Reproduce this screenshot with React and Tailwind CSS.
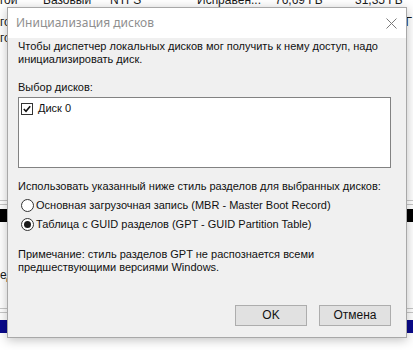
export default function App() {
  return (
    <div
      className="relative w-[413px] h-[350px] overflow-hidden bg-white text-black"
      style={{ fontFamily: '"Liberation Sans", Arial, sans-serif' }}
    >
      {/* ===== background: disk management list ===== */}
      <div className="flex flex-col text-[12px] leading-[16px] text-[#1a1a1a]">
        <div className="flex -mt-[8px] h-[16px] whitespace-nowrap">
          <span className="w-[43px]">гой</span>
          <span className="w-[67px]">Базовый</span>
          <span className="w-[87px]">NTFS</span>
          <span className="w-[78px]">Исправен...</span>
          <span className="w-[80px]">76,69 ГБ</span>
          <span>31,35 ГБ</span>
        </div>
        <div className="flex justify-between h-[16px] mt-[6px]">
          <span>гой</span>
          <span className="pr-[1px]">Г</span>
        </div>
        <div className="h-[16px]">гой</div>
        <div className="h-[154px]" />
        <div className="h-px bg-[#c8c8c8]" />
        <div className="h-[3px]" />
        <div className="h-px bg-[#c8c8c8]" />
        <div className="h-[4px]" />
        <div className="h-[13px] bg-black" />
        <div className="h-[45px]" />
        <div className="h-[16px]">ед</div>
        <div className="h-[25px]" />
        <div className="h-px bg-[#c8c8c8]" />
        <div className="h-[3px]" />
        <div className="h-px bg-[#c8c8c8]" />
        <div className="h-[7px]" />
        <div className="h-[13px] bg-[#0a0a8c]" />
      </div>

      {/* ===== dialog window ===== */}
      <div className="absolute left-[7px] top-[7px] w-[400px] h-[331px] flex flex-col border border-[#a8a8a8] bg-[#f0f0f0] shadow-[0_2px_10px_rgba(0,0,0,0.25)]">
        <div className="h-[30px] bg-white flex items-center justify-between pl-[8px] pr-[9px]">
          <span
            className="text-[12px] text-[#8f8f8f]"
            style={{ fontFamily: '"Noto Sans", "Open Sans", sans-serif' }}
          >
            Инициализация дисков
          </span>
          <svg width="11" height="11" viewBox="0 0 11 11" className="text-[#7a7a7a]">
            <path d="M0.5 0.5 L10.5 10.5 M10.5 0.5 L0.5 10.5" stroke="currentColor" strokeWidth="1" />
          </svg>
        </div>

        <div className="flex flex-col pl-[10px] pr-[15px] pt-[2px] text-[11px] leading-[13px] text-[#111]">
          <p>
            Чтобы диспетчер локальных дисков мог получить к нему доступ, надо инициализировать диск.
          </p>

          <p className="mt-[15px]">Выбор дисков:</p>

          <div className="mt-[3px] h-[71px] bg-white border border-[#828282] pt-[4px] pl-[2px]">
            <label className="flex items-center gap-[5px] h-[13px]">
              <span className="w-[12px] h-[12px] border border-[#333] bg-white flex items-center justify-center">
                <svg width="8" height="8" viewBox="0 0 8 8">
                  <path d="M0.8 4 L3 6.2 L7.2 1.2" fill="none" stroke="#111" strokeWidth="1.6" />
                </svg>
              </span>
              <span>Диск 0</span>
            </label>
          </div>

          <p className="mt-[12px]">Использовать указанный ниже стиль разделов для выбранных дисков:</p>

          <div className="mt-[3px] flex flex-col pl-[3px]">
            <label className="flex items-center gap-[2px] h-[19px]">
              <span className="w-[13px] h-[13px] rounded-full border border-[#333] bg-white" />
              <span>Основная загрузочная запись (MBR - Master Boot Record)</span>
            </label>
            <label className="flex items-center gap-[2px] h-[19px]">
              <span className="w-[13px] h-[13px] rounded-full border border-[#333] bg-white flex items-center justify-center">
                <span className="w-[7px] h-[7px] rounded-full bg-[#1a1a1a]" />
              </span>
              <span>Таблица с GUID разделов (GPT - GUID Partition Table)</span>
            </label>
          </div>

          <p className="mt-[14px] w-[300px]">
            Примечание: стиль разделов GPT не распознается всеми предшествующими версиями Windows.
          </p>

          <div className="mt-[31px] flex justify-end gap-[12px]">
            <button className="w-[72px] h-[21px] bg-[#e1e1e1] border border-[#adadad] text-[12px]">OK</button>
            <button className="w-[72px] h-[21px] bg-[#e1e1e1] border border-[#adadad] text-[12px]">Отмена</button>
          </div>
        </div>
      </div>
    </div>
  );
}
